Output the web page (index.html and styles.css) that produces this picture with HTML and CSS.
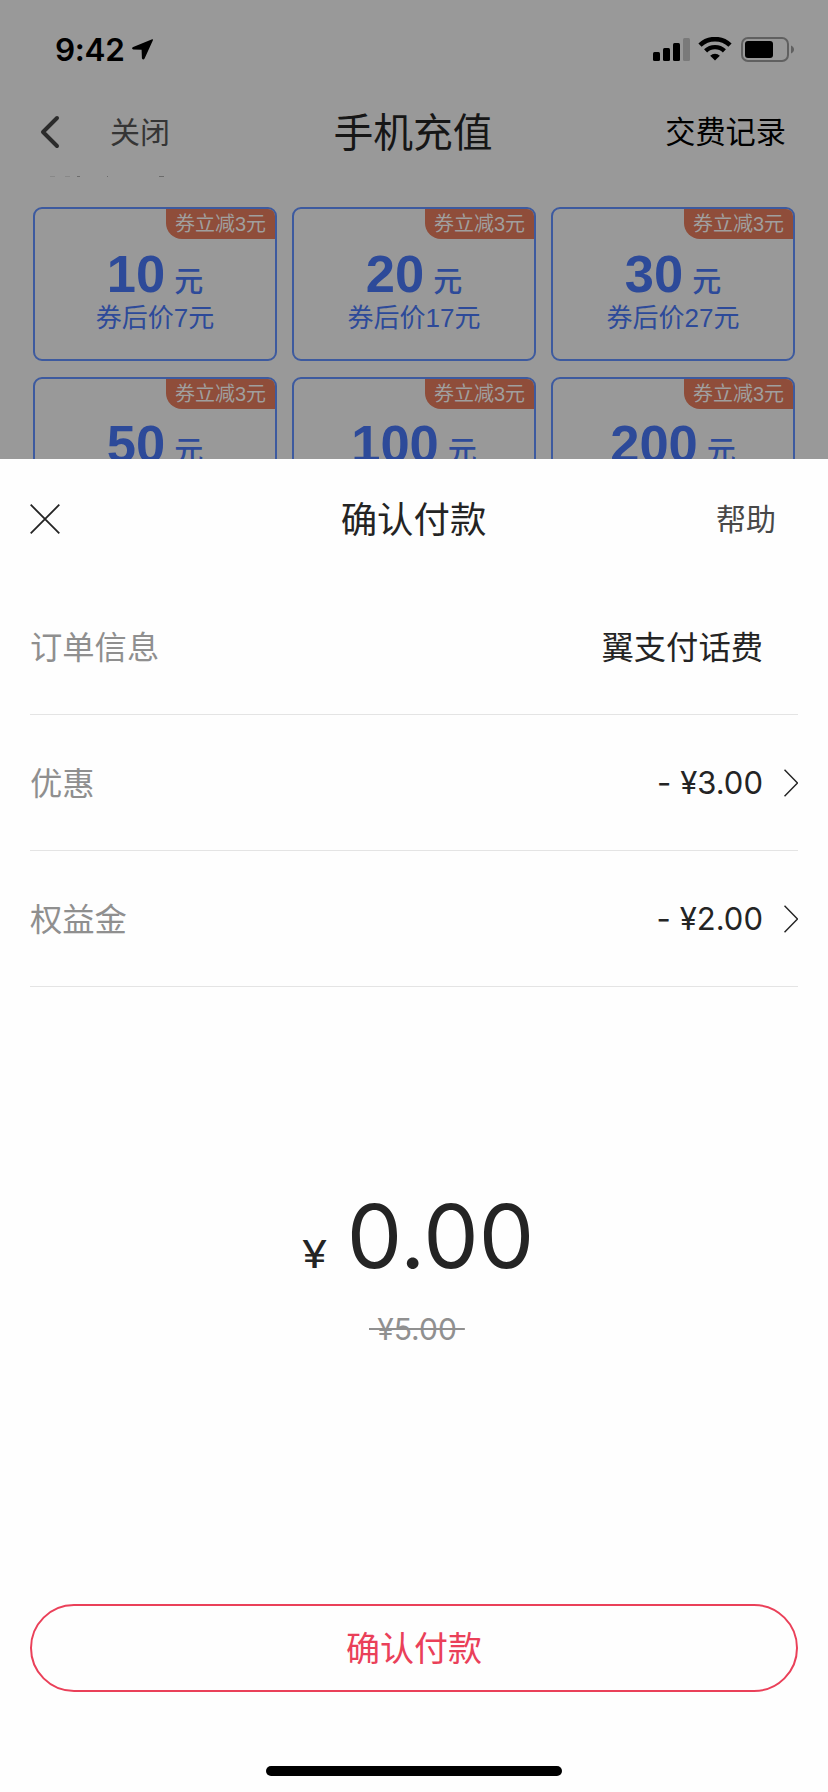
FILE: index.html
```
<!DOCTYPE html>
<html lang="zh-CN">
<head>
<meta charset="utf-8">
<title>确认付款</title>
<link rel="stylesheet" href="styles.css">
</head>
<body>
<main class="screen">
  <section class="backdrop">
    <header class="status">
      <div class="clock"><span class="time">9:42</span>
        <svg class="location" width="22" height="22" viewBox="0 0 22 22"><path d="M20.2.3 1.2 7.9c-1.6.7-1.3 2.5.2 2.6l8.2.2.3 8.4c.1 1.6 2 1.8 2.7.3L20.9 1.200C21.200.5 20.800.1 20.200.3Z"/></svg>
      </div>
      <div class="indicators">
        <svg width="37" height="23" viewBox="0 0 37 23"><rect y="14" width="7" height="9" rx="1.500"/><rect x="10" y="10" width="7" height="13" rx="1.500"/><rect x="20" y="5" width="7" height="18" rx="1.500"/><rect x="30" width="7" height="23" rx="1.500" fill="#7a7a7a"/></svg>
        <svg class="wifi" width="34" height="24" viewBox="0 0 34 24"><g fill="none" stroke="#000"><path d="M2 8.200a21.500 21.500 0 0 1 30 0" stroke-width="4.600"/><path d="M7.600 13.900a13.500 13.500 0 0 1 18.800 0" stroke-width="4.400"/></g><path d="m17 23.500-4.800-4.800a6.900 6.900 0 0 1 9.600 0Z"/></svg>
        <svg class="battery" width="54" height="25" viewBox="0 0 54 25"><rect x="1" y="1" width="46" height="23" rx="6" fill="none" stroke="#606060" stroke-width="2"/><rect x="4" y="4" width="28" height="17" rx="3"/><path d="M50 8.500c4 1.500 4 6.500 0 8Z" fill="#606060"/></svg>
      </div>
    </header>
    <nav class="navbar">
      <div class="nav-left">
        <svg width="20" height="34" viewBox="0 0 20 34"><path d="M17 3 3 17 17 31" fill="none" stroke="#2b2b2b" stroke-width="4" stroke-linecap="round" stroke-linejoin="round"/></svg>
        <span class="nav-close">关闭</span>
      </div>
      <h1 class="nav-title">手机充值</h1>
      <span class="nav-right">交费记录</span>
    </nav>
    <svg class="scrolled" width="120" height="1" viewBox="0 0 120 1"><path fill="#888" d="M0 0h5v1H0zM15 0h5v1h-5z"/><path fill="#6c6c6c" d="M27 0h3v1h-3zM57 0h1v1h-1zM109 0h5v1h-5z"/></svg>
    <div class="plans">
      <article class="plan"><span class="badge">券立减3元</span><p class="amount">10<span class="unit">元</span></p><p class="after">券后价7元</p></article>
      <article class="plan"><span class="badge">券立减3元</span><p class="amount">20<span class="unit">元</span></p><p class="after">券后价17元</p></article>
      <article class="plan"><span class="badge">券立减3元</span><p class="amount">30<span class="unit">元</span></p><p class="after">券后价27元</p></article>
      <article class="plan"><span class="badge">券立减3元</span><p class="amount">50<span class="unit">元</span></p></article>
      <article class="plan"><span class="badge">券立减3元</span><p class="amount">100<span class="unit">元</span></p></article>
      <article class="plan"><span class="badge">券立减3元</span><p class="amount">200<span class="unit">元</span></p></article>
    </div>
  </section>
  <section class="sheet">
    <header class="sheet-head">
      <svg class="sheet-close" width="30" height="30" viewBox="0 0 30 30"><path d="m.700.700 28.600 28.600m0-28.600L.700 29.300" stroke="#242424" stroke-width="1.800"/></svg>
      <h2 class="sheet-title">确认付款</h2>
      <span class="help">帮助</span>
    </header>
    <div class="row"><span class="label">订单信息</span><span class="value merchant">翼支付话费</span></div>
    <div class="row"><span class="label">优惠</span><span class="value"><span class="minus">-</span>¥3.00</span><svg class="chevron" width="14" height="28" viewBox="0 0 14 28"><path d="m.500.700 13 13.300-13 13.300" fill="none" stroke="#242424" stroke-width="1.500"/></svg></div>
    <div class="row"><span class="label">权益金</span><span class="value"><span class="minus">-</span>¥2.00</span><svg class="chevron" width="14" height="28" viewBox="0 0 14 28"><path d="m.500.700 13 13.300-13 13.300" fill="none" stroke="#242424" stroke-width="1.500"/></svg></div>
    <div class="total"><span class="currency">¥</span><span class="sum">0.00</span></div>
    <div class="original"><span class="struck">¥5.00</span></div>
    <button class="confirm">确认付款</button>
    <div class="home"></div>
  </section>
</main>
</body>
</html>
```
FILE: styles.css
```
* { box-sizing: border-box; margin: 0; }
body { margin: 0; background: #fefefe; font-family: Inter, "Noto Sans CJK SC", sans-serif; color: #242424; }
.screen { width: 828px; height: 1792px; display: flex; flex-direction: column; overflow: hidden; }
h1, h2 { font-weight: 400; }
svg { display: block; flex: none; }

.backdrop { height: 459px; flex: none; overflow: hidden; background: #999; }
.status { height: 88px; padding: 37px 33px 0 55px; display: flex; justify-content: space-between; color: #000; }
.clock { display: flex; gap: 7px; height: 26px; }
.time { font-size: 31.5px; font-weight: 600; line-height: 26px; letter-spacing: -0.3px; }
.location { margin-top: 2px; }
.indicators { display: flex; align-items: flex-start; }
.indicators svg:first-child { margin-top: 1px; }
.wifi { margin-left: 8px; }
.battery { margin-left: 9px; }

.navbar { height: 88px; padding: 0 42px 0 40px; display: grid; grid-template-columns: 1fr auto 1fr; align-items: center; }
.nav-left { display: flex; align-items: center; gap: 50px; }
.nav-close { font-size: 30px; color: #353535; padding-bottom: 4px; }
.nav-title { font-size: 39.8px; line-height: 60px; color: #161616; padding-top: 2px; }
.nav-right { font-size: 30.2px; color: #000; text-align: right; padding-bottom: 4px; }
.scrolled { margin-left: 50px; }

.plans { display: grid; grid-template-columns: repeat(3, 244px); grid-auto-rows: 154px; gap: 16px 15px; padding: 30px 33px 0; font-family: "Liberation Sans", "Noto Sans CJK SC", sans-serif; color: #2d4a99; }
.plan { border: 2px solid #3d5a9f; border-radius: 9px; display: flex; flex-direction: column; align-items: center; overflow: hidden; }
.badge { align-self: flex-end; width: 109px; height: 30px; line-height: 30px; padding-left: 9px; font-size: 20px; white-space: nowrap; color: #a09f9e; background: #8f4d3a; border-bottom-left-radius: 16px; }
.amount { font-size: 52.5px; font-weight: 700; line-height: 60px; height: 60px; margin-top: 5px; white-space: nowrap; }
.unit { font-size: 29px; font-weight: 500; margin-left: 9px; }
.after { font-size: 26px; line-height: 30px; margin-top: -1px; white-space: nowrap; }

.sheet { flex: 1; padding: 0 30px; display: flex; flex-direction: column; background: #fefefe; }
.sheet-head { height: 120px; display: grid; grid-template-columns: 1fr auto 1fr; align-items: center; padding-right: 22px; }
.sheet-title { font-size: 36.4px; line-height: 54px; margin-left: 21px; padding-top: 2px; }
.help { font-size: 30px; color: #484848; text-align: right; padding-bottom: 4px; }
.row { height: 136px; display: flex; align-items: center; border-bottom: 1px solid #e4e4e4; }
.label { flex: 1; font-size: 32.3px; color: #8f8f8f; padding-bottom: 4px; }
.value { font-size: 31px; margin-right: 35px; white-space: nowrap; }
.merchant { font-size: 32.3px; padding-bottom: 4px; }
.minus { margin-right: 9px; }
.row .chevron { margin-left: -14px; }
.total { margin-top: 193px; height: 112px; display: flex; justify-content: center; align-items: baseline; gap: 22px; padding-left: 10px; }
.currency { font-size: 38px; transform: scaleX(1.2); }
.sum { font-size: 88px; line-height: 112px; }
.original { display: flex; justify-content: center; margin-top: 15px; padding-left: 6px; }
.struck { font-size: 30px; line-height: 44px; color: #909090; padding: 0 8px; background: linear-gradient(#909090, #909090) center / 100% 2px no-repeat; }
.confirm { margin-top: 253px; height: 88px; width: 768px; flex: none; border: 2px solid #ea4059; border-radius: 44px; background: none; color: #ea4059; font: 400 34px "Noto Sans CJK SC", sans-serif; padding: 0 0 4px; }
.home { width: 296px; height: 10px; flex: none; border-radius: 5px; background: #000; margin: 74px auto 0; }
```
